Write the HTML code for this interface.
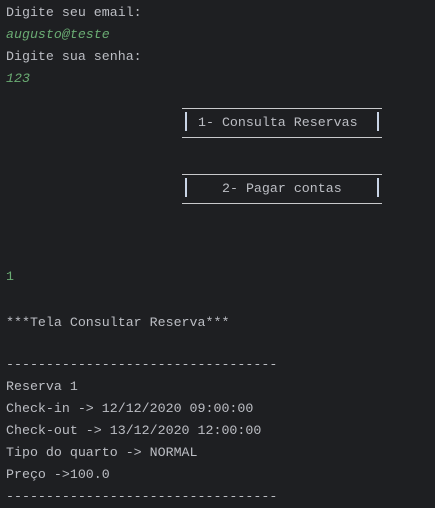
<!DOCTYPE html><html><head><style>
body{margin:0;background:#1e1f22;width:435px;height:503px;overflow:hidden;position:relative;font-family:"Liberation Mono",monospace;font-size:13.3px;color:#bcbec4}
.l{position:absolute;left:6px;white-space:pre;line-height:22px}
.g{color:#6aab73;font-style:italic}
.g2{color:#6aab73}
.h{position:absolute;left:182px;width:200px;height:1px;background:#c8c9cc}
.v{position:absolute;width:2px;height:19px;background:#c9d4e6}
</style></head><body>
<div class="l" style="top:2px">Digite seu email:</div>
<div class="l g" style="top:24px">augusto@teste</div>
<div class="l" style="top:46px">Digite sua senha:</div>
<div class="l g" style="top:68px">123</div>
<div class="h" style="top:108px"></div>
<div class="v" style="left:185px;top:112px"></div>
<div class="v" style="left:377px;top:112px"></div>
<div class="l" style="left:198px;top:112px">1- Consulta Reservas</div>
<div class="h" style="top:137px"></div>
<div class="h" style="top:174px"></div>
<div class="v" style="left:185px;top:178px"></div>
<div class="v" style="left:377px;top:178px"></div>
<div class="l" style="left:222px;top:178px">2- Pagar contas</div>
<div class="h" style="top:203px"></div>
<div class="l g2" style="top:266px">1</div>
<div class="l" style="top:312px">***Tela Consultar Reserva***</div>
<div class="l" style="top:354px">----------------------------------</div>
<div class="l" style="top:376px">Reserva 1</div>
<div class="l" style="top:398px">Check-in -> 12/12/2020 09:00:00</div>
<div class="l" style="top:420px">Check-out -> 13/12/2020 12:00:00</div>
<div class="l" style="top:442px">Tipo do quarto -> NORMAL</div>
<div class="l" style="top:464px">Preço ->100.0</div>
<div class="l" style="top:486px">----------------------------------</div>
</body></html>
